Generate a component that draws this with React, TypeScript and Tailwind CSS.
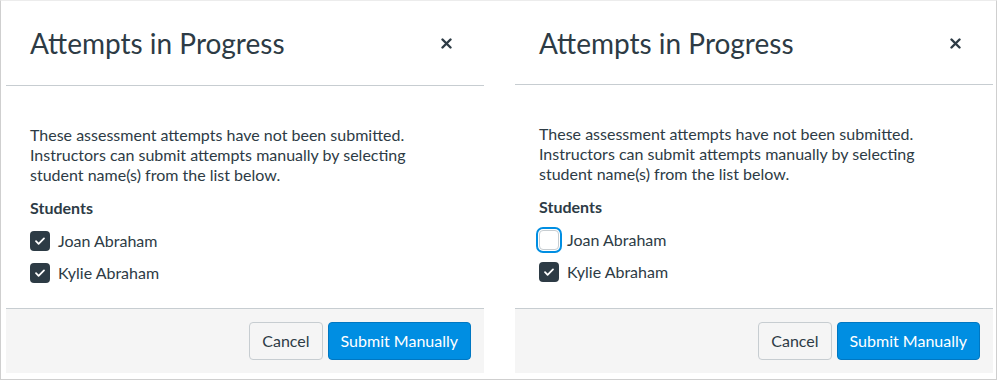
import React from 'react';

type Student = { name: string; checked: boolean; focused?: boolean };

function CloseIcon() {
  return (
    <svg className="w-[11px] h-[11px] text-[#2d3b45]" viewBox="0 0 11 11" fill="none">
      <path d="M1.5 1.5l8 8M9.5 1.5l-8 8" stroke="currentColor" strokeWidth={2.4} strokeLinecap="round" />
    </svg>
  );
}

function Checkbox({ checked, focused }: { checked: boolean; focused?: boolean }) {
  if (checked) {
    return (
      <span className="w-5 h-5 rounded-[4px] bg-[#2d3b45] flex items-center justify-center shrink-0">
        <svg className="w-3 h-3" viewBox="0 0 12 12" fill="none">
          <path d="M2 6.2l2.6 2.6L10 3.4" stroke="#fff" strokeWidth={1.8} strokeLinecap="round" strokeLinejoin="round" />
        </svg>
      </span>
    );
  }
  return (
    <span
      className={
        'w-5 h-5 rounded-[4px] bg-white border border-[#c7cdd1] shrink-0 ' +
        (focused ? 'ring-2 ring-[#008ee2] ring-offset-1' : '')
      }
    />
  );
}

function Modal({ students, headerHeight }: { students: Student[]; headerHeight: string }) {
  return (
    <div className="w-[478px] h-[372px] flex flex-col text-[#2d3b45]">
      {/* Header */}
      <div className={`${headerHeight} border-b border-[#c7cdd1] flex items-start justify-between pl-6 pr-8 pt-6`}>
        <h2 className="text-[28px] leading-[36px] font-normal">Attempts in Progress</h2>
        <div className="mt-[13px]">
          <CloseIcon />
        </div>
      </div>

      {/* Body */}
      <div className="flex-1 px-6 pt-[39px]">
        <p className="text-base leading-5 w-[420px]">
          These assessment attempts have not been submitted. Instructors can submit attempts manually by
          selecting student name(s) from the list below.
        </p>
        <div className="mt-[13px] text-base leading-5 font-bold">Students</div>
        <div className="mt-[13px] flex flex-col gap-3">
          {students.map((s) => (
            <label key={s.name} className="flex items-center gap-2 h-5">
              <Checkbox checked={s.checked} focused={s.focused} />
              <span className="text-base leading-5">{s.name}</span>
            </label>
          ))}
        </div>
      </div>

      {/* Footer */}
      <div className="h-[65px] border-t border-[#c7cdd1] bg-[#f5f5f5] flex items-center justify-end gap-[5px] pr-[13px]">
        <button className="h-[38px] px-3 rounded-[4px] border border-[#c7cdd1] bg-[#f5f5f5] text-base text-[#2d3b45]">
          Cancel
        </button>
        <button className="h-[38px] px-3 rounded-[4px] border border-[#0077c2] bg-[#008ee2] text-base text-white">
          Submit Manually
        </button>
      </div>
    </div>
  );
}

export default function App() {
  return (
    <div className="w-[999px] h-[381px] bg-white font-[Lato,sans-serif]">
      <div className="w-[997px] h-[380px] border border-[#cfcfcf] border-t-[#ececec] flex gap-[31px] pl-[5px] pt-0">
        <Modal
          headerHeight="h-[85px]"
          students={[
            { name: 'Joan Abraham', checked: true },
            { name: 'Kylie Abraham', checked: true },
          ]}
        />
        <Modal
          headerHeight="h-[84px]"
          students={[
            { name: 'Joan Abraham', checked: false, focused: true },
            { name: 'Kylie Abraham', checked: true },
          ]}
        />
      </div>
    </div>
  );
}
